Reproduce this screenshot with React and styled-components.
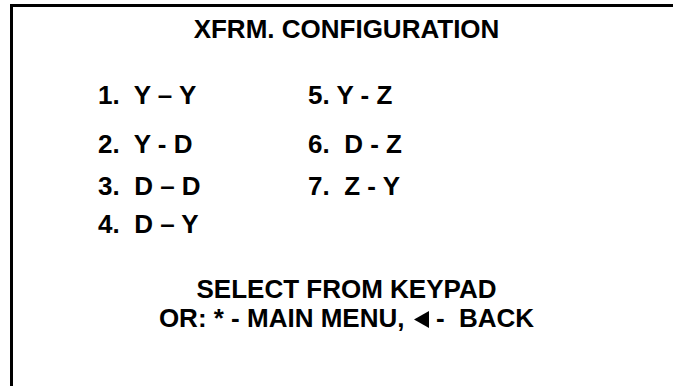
import React from 'react';
import styled, { createGlobalStyle } from 'styled-components';

const GlobalStyle = createGlobalStyle`
  html, body {
    margin: 0;
    padding: 0;
    background: #fff;
    overflow: hidden;
  }
  body {
    font-family: "Liberation Sans", Arial, sans-serif;
    color: #000;
  }
`;

const Frame = styled.div`
  box-sizing: border-box;
  margin: 4px 0 0 10px;
  width: 670px;
  height: 382px;
  border-top: 3px solid #000;
  border-left: 3px solid #000;
  display: flex;
  flex-direction: column;
  align-items: center;
  font-weight: bold;
  font-size: 26px;
`;

const Title = styled.div`
  margin-top: 8px;
  line-height: 29px;
`;

const Options = styled.div`
  align-self: flex-start;
  margin: 37px 0 0 85px;
  display: grid;
  grid-template-columns: 210px auto;
  grid-template-rows: 49px 42px 38px 29px;
`;

const Option = styled.div`
  white-space: pre;
  line-height: 29px;
`;

const Prompt = styled.div`
  margin-top: 36px;
  text-align: center;
  line-height: 29px;
  white-space: pre;
`;

const BackArrow = styled.svg`
  width: 15px;
  height: 17px;
  margin: 0 0 0 2px;
  vertical-align: -1px;
`;

const options = [
  '1.  Y – Y',
  '5. Y - Z',
  '2.  Y - D',
  '6.  D - Z',
  '3.  D – D',
  '7.  Z - Y',
  '4.  D – Y',
];

const App = () => (
  <>
    <GlobalStyle />
    <Frame>
      <Title>XFRM. CONFIGURATION</Title>
      <Options>
        {options.map(o => (
          <Option key={o}>{o}</Option>
        ))}
      </Options>
      <Prompt>
        SELECT FROM KEYPAD
        <br />
        {'OR: * - MAIN MENU, '}
        <BackArrow viewBox="0 0 15 17">
          <polygon points="0,8.5 15,0 15,17" fill="#000" />
        </BackArrow>
        {' -  BACK'}
      </Prompt>
    </Frame>
  </>
);

export default App;
